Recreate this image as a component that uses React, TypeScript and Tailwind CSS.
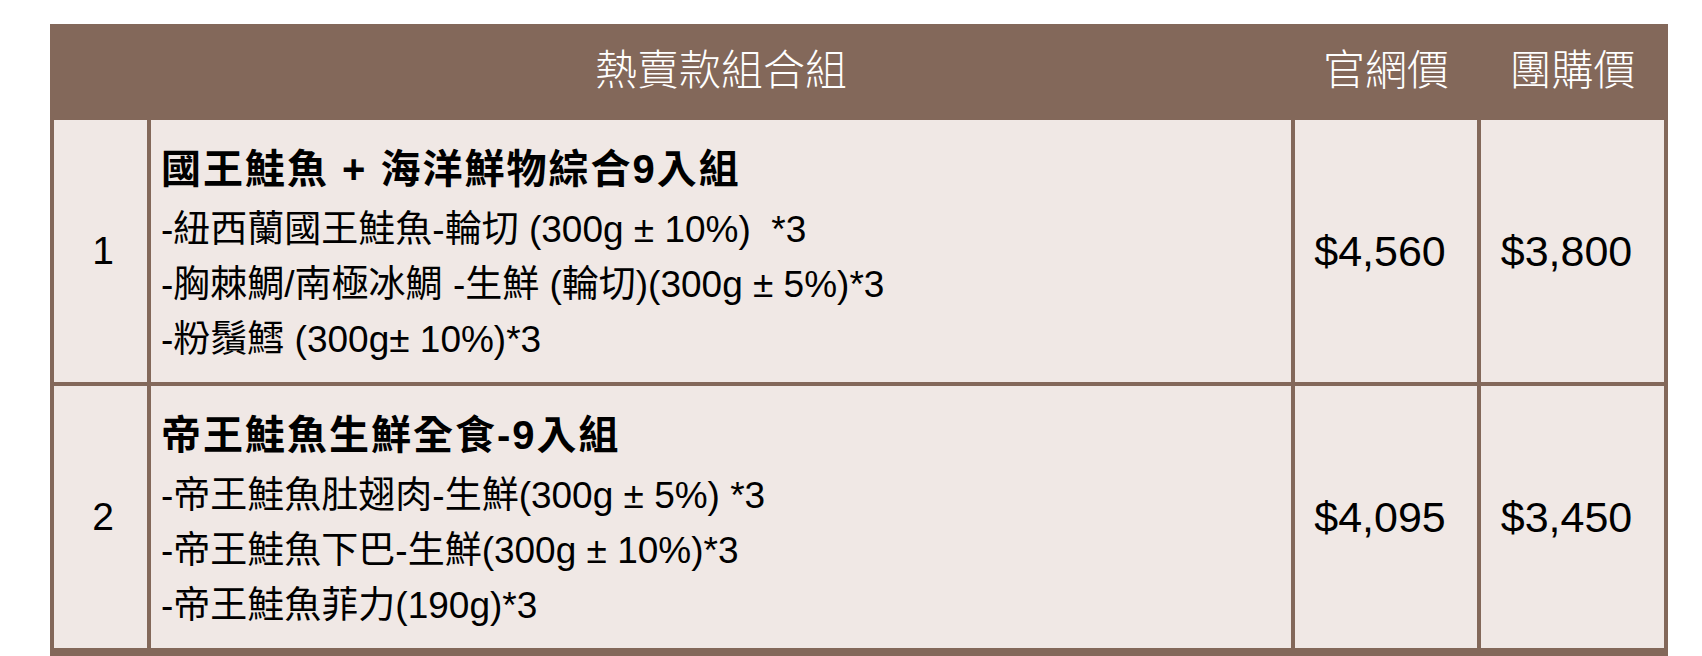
import { Fragment } from "react";

const rows = [
	{
		no: "1",
		title: "國王鮭魚 + 海洋鮮物綜合9入組",
		items: [
			"-紐西蘭國王鮭魚-輪切 (300g ± 10%)  *3",
			"-胸棘鯛/南極冰鯛 -生鮮 (輪切)(300g ± 5%)*3",
			"-粉鬚鱈 (300g± 10%)*3",
		],
		price: "$4,560",
		group: "$3,800",
	},
	{
		no: "2",
		title: "帝王鮭魚生鮮全食-9入組",
		items: [
			"-帝王鮭魚肚翅肉-生鮮(300g ± 5%) *3",
			"-帝王鮭魚下巴-生鮮(300g ± 10%)*3",
			"-帝王鮭魚菲力(190g)*3",
		],
		price: "$4,095",
		group: "$3,450",
	},
];

export default function App() {
	return (
		<div className="min-h-screen bg-white pt-6 pl-[50px] font-['Liberation_Sans','Noto_Sans_CJK_TC',sans-serif] text-black">
			<div className="grid w-[1618px] grid-cols-[93px_1140px_182px_183px] gap-1 bg-[#83685a] px-1 pb-2">
				{/* header */}
				<div className="h-[92px]" />
				<div className="flex items-center justify-center text-[42px] font-light text-white">
					熱賣款組合組
				</div>
				<div className="flex items-center justify-center text-[42px] font-light text-white">
					官網價
				</div>
				<div className="flex items-center justify-center text-[42px] font-light text-white">
					團購價
				</div>

				{rows.map((r) => (
					<Fragment key={r.no}>
						<div className="flex h-[262px] items-center justify-center bg-[#f0e8e5] pl-[5px] text-[39px]">
							{r.no}
						</div>
						<div className="flex flex-col justify-center bg-[#f0e8e5] px-[10px]">
							<div className="text-[40px] font-bold leading-[66px] tracking-[2px]">{r.title}</div>
							{r.items.map((item) => (
								<div key={item} className="whitespace-pre text-[37px] leading-[55px]">
									{item}
								</div>
							))}
						</div>
						<div className="flex items-center justify-center bg-[#f0e8e5] pr-3 text-[43px]">
							{r.price}
						</div>
						<div className="flex items-center justify-center bg-[#f0e8e5] pr-3 text-[43px]">
							{r.group}
						</div>
					</Fragment>
				))}
			</div>
		</div>
	);
}
